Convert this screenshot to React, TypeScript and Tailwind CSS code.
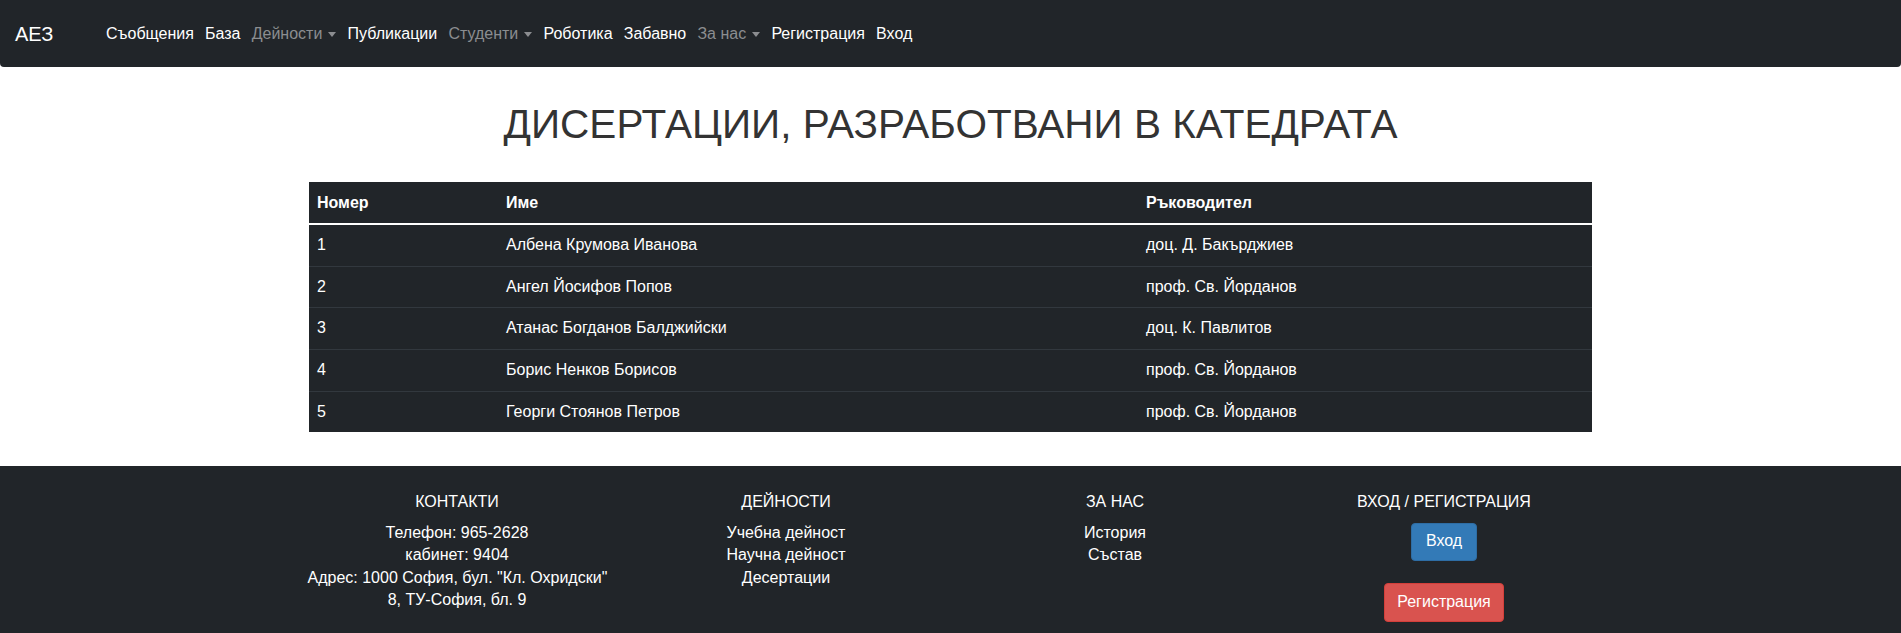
const navItems = [
  { label: "Съобщения", active: true },
  { label: "База", active: true },
  { label: "Дейности", active: false, dropdown: true },
  { label: "Публикации", active: true },
  { label: "Студенти", active: false, dropdown: true },
  { label: "Роботика", active: true },
  { label: "Забавно", active: true },
  { label: "За нас", active: false, dropdown: true },
  { label: "Регистрация", active: true },
  { label: "Вход", active: true },
]

const rows = [
  { id: 1, name: "Албена Крумова Иванова", supervisor: "доц. Д. Бакърджиев" },
  { id: 2, name: "Ангел Йосифов Попов", supervisor: "проф. Св. Йорданов" },
  { id: 3, name: "Атанас Богданов Балджийски", supervisor: "доц. К. Павлитов" },
  { id: 4, name: "Борис Ненков Борисов", supervisor: "проф. Св. Йорданов" },
  { id: 5, name: "Георги Стоянов Петров", supervisor: "проф. Св. Йорданов" },
]

function Navbar() {
  return (
    <nav className="h-[67px] bg-[#212529] rounded-b-[4px] flex items-center px-[15px]">
      <a className="text-[20px] text-white mr-[47px]">АЕЗ</a>
      <ul className="flex items-center">
        {navItems.map((item) => (
          <li key={item.label}>
            <a
              className={`flex items-center px-[5.6px] text-[16px] ${
                item.active ? "text-white" : "text-[#8b8d90]"
              }`}
            >
              {item.label}
              {item.dropdown && (
                <span className="ml-[6px] mt-[2px] w-0 h-0 border-l-[4px] border-r-[4px] border-t-[5px] border-l-transparent border-r-transparent border-t-[#8b8d90]" />
              )}
            </a>
          </li>
        ))}
      </ul>
    </nav>
  )
}

function DissertationsTable() {
  return (
    <table className="w-[1283px] mx-auto bg-[#212529] text-white text-[16px] leading-[24.6px] border-collapse">
      <thead>
        <tr>
          <th className="w-[189px] text-left font-bold px-2 py-2 border-t border-[#212529] border-b-2 border-b-white">Номер</th>
          <th className="w-[640px] text-left font-bold px-2 py-2 border-t border-[#212529] border-b-2 border-b-white">Име</th>
          <th className="text-left font-bold px-2 py-2 border-t border-[#212529] border-b-2 border-b-white">Ръководител</th>
        </tr>
      </thead>
      <tbody>
        {rows.map((row) => (
          <tr key={row.id} className="border-t border-[#32383e]">
            <td className="px-2 py-2">{row.id}</td>
            <td className="px-2 py-2">{row.name}</td>
            <td className="px-2 py-2">{row.supervisor}</td>
          </tr>
        ))}
      </tbody>
    </table>
  )
}

function Footer() {
  return (
    <footer className="bg-[#212529] text-white text-[16px] leading-[22.5px] pt-[25px] pb-[30px]">
      <div className="w-[1316px] mx-auto grid grid-cols-4 text-center">
        <div className="px-[15px]">
          <h4 className="mb-[8px]">КОНТАКТИ</h4>
          <p>Телефон: 965-2628</p>
          <p>кабинет: 9404</p>
          <p className="whitespace-nowrap">
            Адрес: 1000 София, бул. "Кл. Охридски"
            <br />
            8, ТУ-София, бл. 9
          </p>
        </div>
        <div className="px-[15px]">
          <h4 className="mb-[8px]">ДЕЙНОСТИ</h4>
          <p>Учебна дейност</p>
          <p>Научна дейност</p>
          <p>Десертации</p>
        </div>
        <div className="px-[15px]">
          <h4 className="mb-[8px]">ЗА НАС</h4>
          <p>История</p>
          <p>Състав</p>
        </div>
        <div className="px-[15px] flex flex-col items-center">
          <h4 className="mb-[9px]">ВХОД / РЕГИСТРАЦИЯ</h4>
          <button className="h-[38px] px-[14px] rounded-[4px] bg-[#337ab7] border border-[#2e6da4] text-white">
            Вход
          </button>
          <button className="mt-[22px] h-[39px] px-[12px] rounded-[4px] bg-[#d9534f] border border-[#d43f3a] text-white">
            Регистрация
          </button>
        </div>
      </div>
    </footer>
  )
}

export default function App() {
  return (
    <div className="min-h-screen bg-white font-['Liberation_Sans',Arial,sans-serif]">
      <Navbar />
      <main className="pt-[35px] pb-[34px]">
        <h1 className="text-[40.5px] leading-[1.1] text-center text-[#333333] mb-[35px]">
          ДИСЕРТАЦИИ, РАЗРАБОТВАНИ В КАТЕДРАТА
        </h1>
        <DissertationsTable />
      </main>
      <Footer />
    </div>
  )
}
